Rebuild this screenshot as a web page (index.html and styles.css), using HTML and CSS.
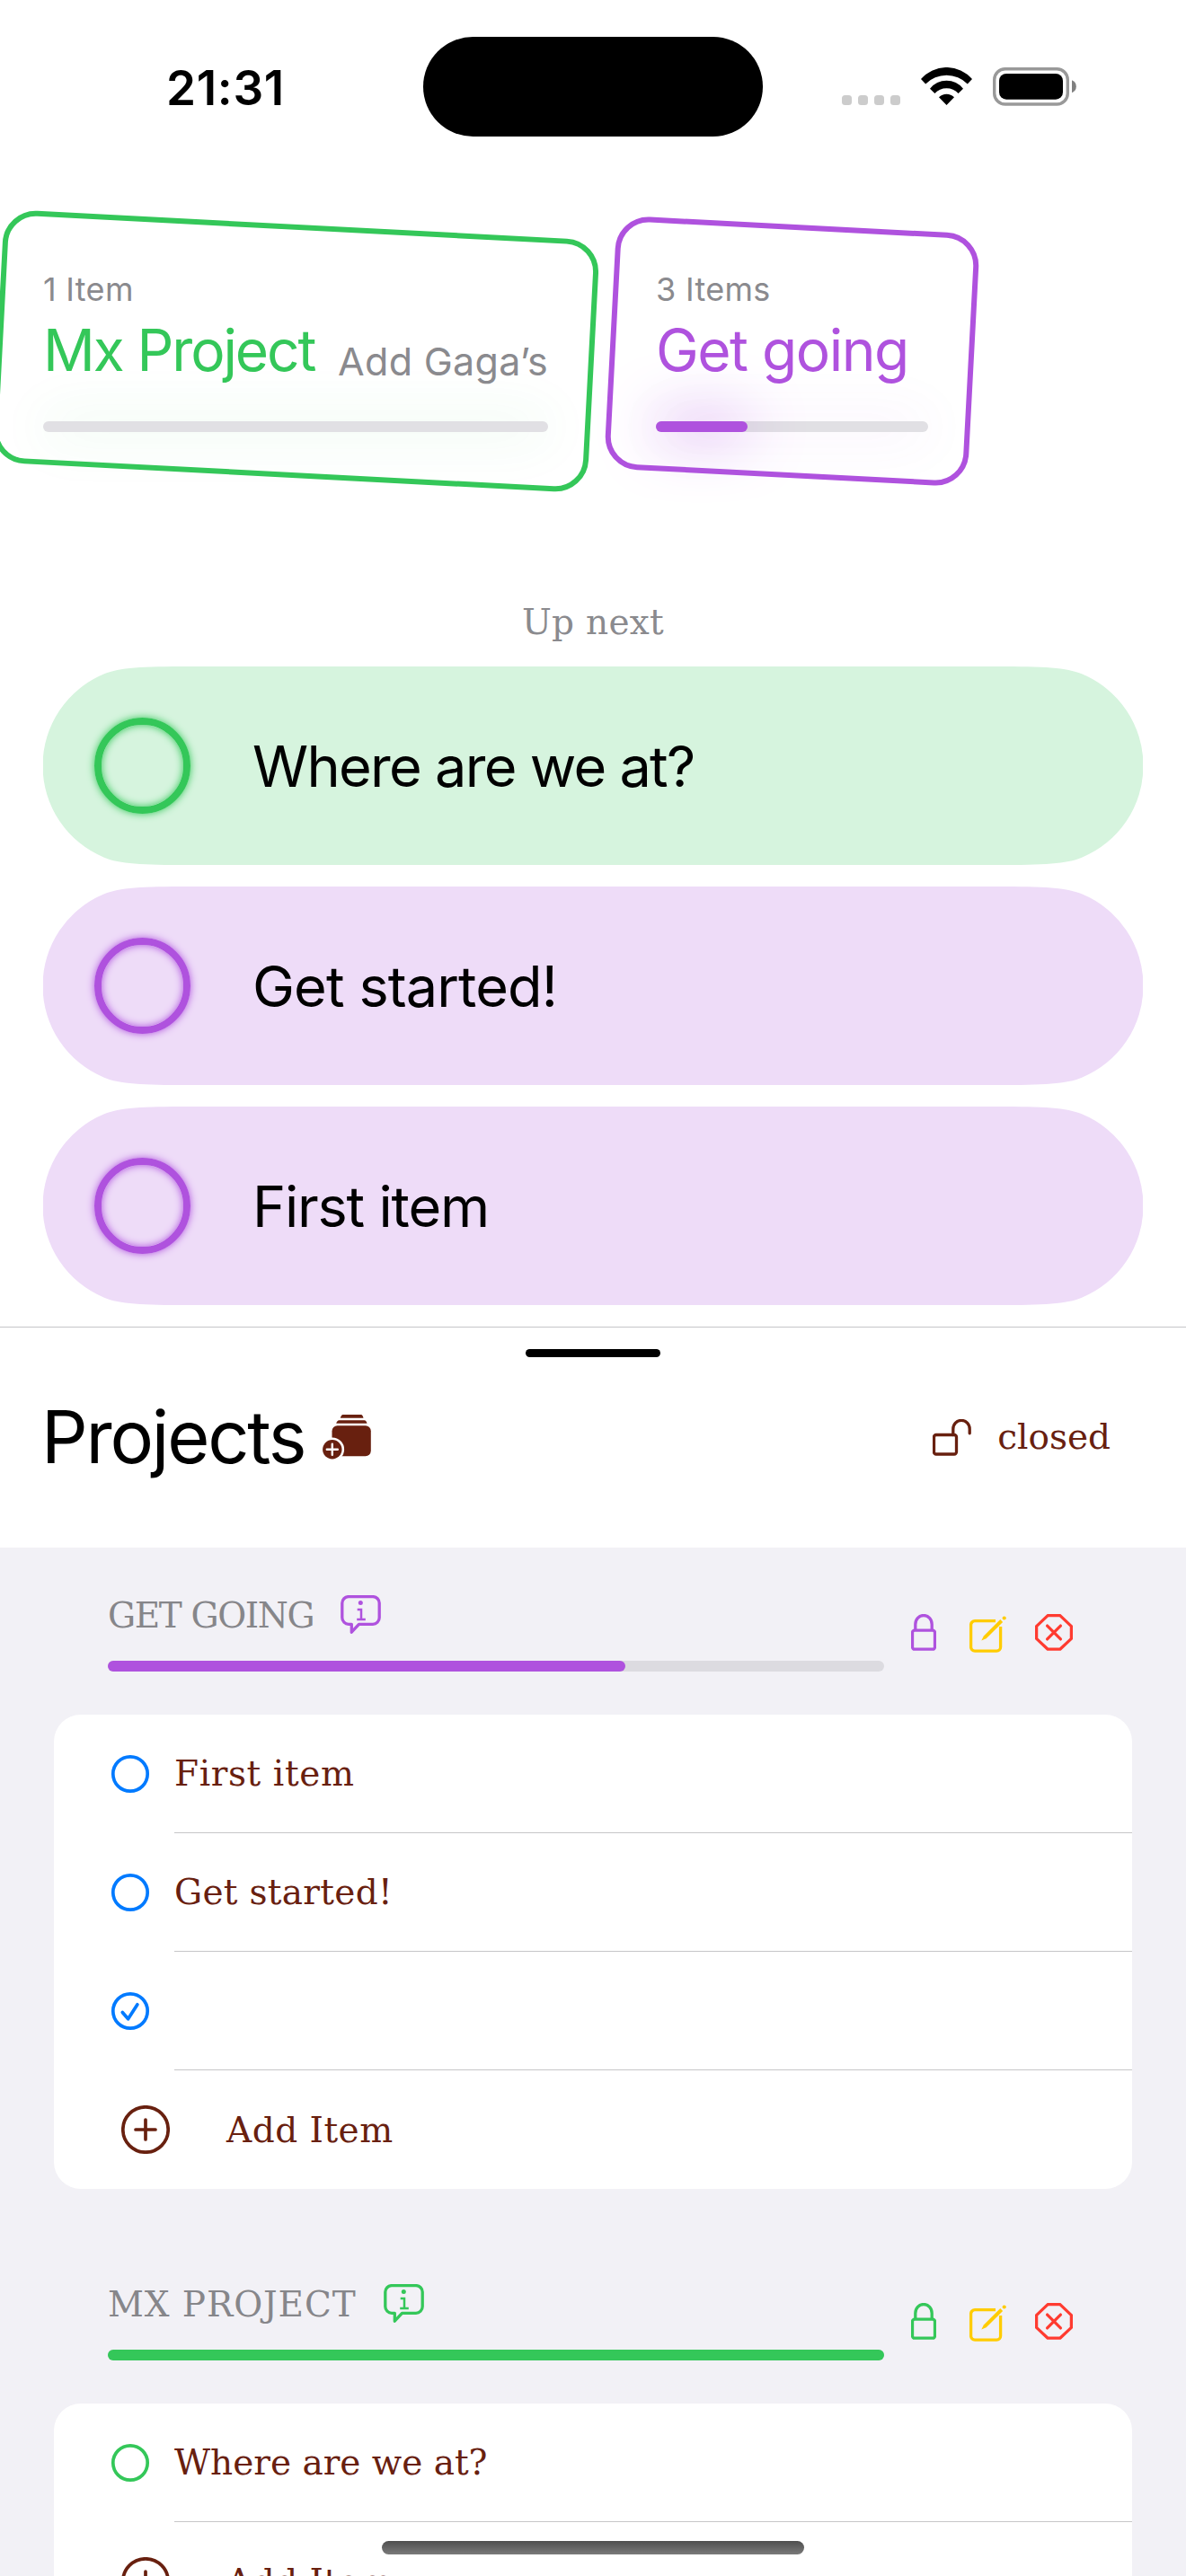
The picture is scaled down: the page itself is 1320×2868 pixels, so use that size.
FILE: index.html
```html
<!DOCTYPE html>
<html lang="en">
<head>
<meta charset="utf-8">
<title>Projects</title>
<link rel="stylesheet" href="styles.css">
</head>
<body>
<svg class="defs" width="0" height="0" aria-hidden="true">
  <symbol id="lock" viewBox="0 0 28 41"><rect x="1.5" y="18.2" width="25" height="21" rx="2.5"/><path d="M4.8 18V11.5a9.2 10 0 0 1 18.4 0V18"/></symbol>
  <symbol id="unlock" viewBox="0 0 43 41"><rect x="1.5" y="17.5" width="25" height="21.5" rx="2.5"/><path d="M22.8 17.5V11a9.2 9.6 0 0 1 18.4 0V15.8" stroke-linecap="round"/></symbol>
  <symbol id="edit" viewBox="0 0 42 42"><path d="M29 5.7H6a4.4 4.4 0 0 0-4.4 4.4V34.7a4.4 4.4 0 0 0 4.4 4.4H30.2a4.4 4.4 0 0 0 4.4-4.4V12"/><path class="solid" d="M13.3 27.6l2.5-5.1L34.3 4.1l2.8 2.8L18.7 25.3z"/><circle class="solid" cx="38.7" cy="2.5" r="2.1"/></symbol>
  <symbol id="remove" viewBox="0 0 42 41"><path d="M14.2 1.6H27.8L40.4 13.6V27.4L27.8 39.2H14.2L1.6 27.4V13.6z" stroke-linejoin="round"/><path d="M13.6 13.1L28.4 27.9M28.4 13.1L13.6 27.9" stroke-linecap="round"/></symbol>
  <symbol id="info" viewBox="0 0 45 44"><path d="M9 1.6H36a7.2 7.2 0 0 1 7.2 7.2V25.1a7.2 7.2 0 0 1-7.2 7.2H20.5L12.3 41.2V32.3H9a7.2 7.2 0 0 1-7.2-7.2V8.8A7.2 7.2 0 0 1 9 1.6z" stroke-linejoin="round"/><circle class="solid" cx="22.3" cy="8.6" r="2.5"/><path d="M18.7 15.9h4.3v11.2M18.2 27.1h9.6" stroke-width="2.5"/></symbol>
  <symbol id="plus" viewBox="0 0 54 54"><circle cx="27" cy="27" r="25.2"/><path d="M27 16v22M16 27h22" stroke-linecap="round"/></symbol>
</svg>

<div class="screen">
  <header class="status">
    <div class="time">21:31</div>
    <div class="island"></div>
    <div class="indicators">
      <div class="dots"><i></i><i></i><i></i><i></i></div>
      <svg class="wifi" width="57" height="42" viewBox="0 0 57 42"><path d="M0 13A37.7 37.7 0 0 1 57 13L51.8 18.5A33 33 0 0 0 5.2 18.5zM10 23.7A23.5 23.5 0 0 1 47 23.7L41.6 29A18 18 0 0 0 15.4 29zM20 33.3A12 12 0 0 1 37 33.3L28.5 42z"/></svg>
      <svg class="battery" width="94" height="43" viewBox="0 0 94 43"><rect x="1.7" y="1.7" width="81.6" height="39.3" rx="12" fill="none" stroke="#999" stroke-width="3.4"/><rect x="7" y="7" width="71" height="28.7" rx="8"/><path d="M88 14.3a7.5 7.5 0 0 1 0 14z" fill="#808080"/></svg>
    </div>
  </header>

  <section class="cards">
    <article class="card green card-wide">
      <div class="count">1 Item</div>
      <div class="titles"><span class="name t-mx">Mx Project</span><span class="next">Add Gaga’s</span></div>
      <div class="meter"></div>
    </article>
    <article class="card purple">
      <div class="count">3 Items</div>
      <div class="titles"><span class="name t-going">Get going</span></div>
      <div class="meter"><div class="fill glow" style="width:33.7%"></div></div>
    </article>
  </section>

  <section class="upnext">
    <h2>Up next</h2>
    <div class="pill green"><span class="ring"></span><span class="p-where">Where are we at?</span></div>
    <div class="pill purple"><span class="ring"></span><span class="p-start">Get started!</span></div>
    <div class="pill purple"><span class="ring"></span><span class="p-first">First item</span></div>
  </section>

  <section class="sheet">
    <div class="handle"></div>
    <div class="bar">
      <h1>Projects</h1>
      <svg class="stack" width="54" height="50" viewBox="0 0 54 50"><path d="M22.5 0h20.5q1.5 0 2.5 3.7h-25.7q1.2-3.7 2.7-3.7zM18.5 6.3h28q2.2 0 3 3.5h-34.3q1-3.5 3.3-3.5z"/><rect x="10.5" y="12.3" width="43.3" height="34" rx="6"/><circle cx="10.8" cy="38.7" r="13.3" fill="#fff"/><circle cx="10.8" cy="38.7" r="10.7"/><path d="M10.8 32.7v12M4.8 38.7h12" stroke="#fff" stroke-width="2.4" stroke-linecap="round"/></svg>
      <svg class="icon unlock" width="43" height="41"><use href="#unlock"/></svg>
      <span class="state">closed</span>
    </div>
  </section>

  <main class="list">
    <section class="group purple">
      <div class="head">
        <div class="info">
          <div class="label"><span class="l-going">GET GOING</span><svg class="icon" width="45" height="44"><use href="#info"/></svg></div>
          <div class="meter"><div class="fill" style="width:66.67%"></div></div>
        </div>
        <svg class="icon" width="28" height="41"><use href="#lock"/></svg>
        <svg class="icon edit" width="42" height="42"><use href="#edit"/></svg>
        <svg class="icon remove" width="42" height="41"><use href="#remove"/></svg>
      </div>
      <div class="rows">
        <div class="row"><svg class="icon check" width="42" height="42"><circle cx="21" cy="21" r="19.2"/></svg><div class="text i-first">First item</div></div>
        <div class="row"><svg class="icon check" width="42" height="42"><circle cx="21" cy="21" r="19.2"/></svg><div class="text i-start">Get started!</div></div>
        <div class="row"><svg class="icon check" width="42" height="42"><circle cx="21" cy="21" r="19.2"/><path d="M12.3 22.5l6.3 7.3L28.9 13.8" stroke-linecap="round" stroke-linejoin="round"/></svg><div class="text"></div></div>
        <div class="row add"><svg class="icon" width="54" height="54"><use href="#plus"/></svg><div>Add Item</div></div>
      </div>
    </section>
    <section class="group green">
      <div class="head">
        <div class="info">
          <div class="label"><span class="l-mx">MX PROJECT</span><svg class="icon" width="45" height="44"><use href="#info"/></svg></div>
          <div class="meter"><div class="fill" style="width:100%"></div></div>
        </div>
        <svg class="icon" width="28" height="41"><use href="#lock"/></svg>
        <svg class="icon edit" width="42" height="42"><use href="#edit"/></svg>
        <svg class="icon remove" width="42" height="41"><use href="#remove"/></svg>
      </div>
      <div class="rows">
        <div class="row"><svg class="icon check-green" width="42" height="42"><circle cx="21" cy="21" r="19.2"/></svg><div class="text">Where are we at?</div></div>
        <div class="row add"><svg class="icon" width="54" height="54"><use href="#plus"/></svg><div>Add Item</div></div>
      </div>
    </section>
  </main>
  <div class="home"></div>
</div>
</body>
</html>
```

FILE: styles.css
```css
* { box-sizing: border-box; margin: 0; padding: 0; }
body { background: #fff; }
.defs { position: absolute; }
.screen {
  position: relative;
  display: flex;
  flex-direction: column;
  width: 1320px;
  height: 2868px;
  overflow: hidden;
  background: #fff;
  color: #000;
  font-family: Inter, "Liberation Sans", sans-serif;
}
.green { --tint: #34c759; --soft: #d6f4de; --haze: rgba(52, 199, 89, .2); }
.purple { --tint: #af52de; --soft: #eedcf8; --haze: rgba(175, 82, 222, .16); }

/* Status bar */
.status {
  display: grid;
  grid-template-columns: 471px 378px 471px;
  align-items: center;
  padding-top: 41px;
  height: 152px;
}
.time { padding-left: 185px; font-size: 53px; font-weight: 600; letter-spacing: .7px; line-height: 62px; padding-top: 2px; }
.island { height: 111px; border-radius: 56px; background: #000; }
.indicators { display: flex; align-items: flex-end; padding-left: 88px; height: 43px; }
.dots { display: flex; gap: 7px; margin-bottom: 1px; }
.dots i { width: 11px; height: 11px; border-radius: 3.5px; background: #ccc; }
.wifi { margin: 0 23px 1px 23px; }

/* Project cards */
.cards { display: flex; gap: 24px; margin-top: 101px; }
.card { position: relative; width: 399px; height: 276px; padding: 48px; }
.card-wide { width: 658px; }
.card::after {
  content: "";
  position: absolute;
  inset: -3px;
  border: 6px solid var(--tint);
  border-radius: 37px;
  transform: rotate(3deg);
}
.count { color: #8a8a8e; font-size: 36px; line-height: 42px; letter-spacing: .3px; }
.titles { display: flex; justify-content: space-between; align-items: flex-end; margin-top: 9px; height: 76px; white-space: nowrap; }
.name { position: relative; z-index: 1; color: var(--tint); font-size: 64px; line-height: 76px; }
.t-mx { letter-spacing: -2.1px; }
.t-going { letter-spacing: -1.5px; }
.next { color: #8a8a8e; font-size: 43px; line-height: 52px; letter-spacing: .3px; }
.meter { height: 12px; border-radius: 6px; background: #dcdbe0; }
.fill { height: 12px; border-radius: 6px; background: var(--tint); }
.card .meter { margin-top: 41px; background: #e1e0e4; box-shadow: 0 0 60px var(--haze); }
.card .glow { box-shadow: 0 0 66px var(--tint); }

/* Up next */
.upnext { display: flex; flex-direction: column; gap: 24px; margin-top: 128px; padding: 0 48px; }
h2 {
  height: 61px;
  text-align: center;
  color: #8a8a8e;
  font: 400 39px/72px "DejaVu Serif", serif;
  letter-spacing: .3px;
}
.pill {
  display: flex;
  align-items: center;
  gap: 69px;
  height: 221px;
  padding-left: 57px;
  background: var(--soft);
  /* capsule with continuous corners */
  clip-path: path("M162 0H1062C1114 0 1139 1.2 1156 8.3A110.5 110.5 0 0 1 1156 212.7C1139 219.8 1114 221 1062 221H162C110 221 85 219.8 68 212.7A110.5 110.5 0 0 1 68 8.3C85 1.2 110 0 162 0Z");
  font-size: 63px;
}
.ring {
  width: 107px;
  height: 107px;
  border: 8px solid var(--tint);
  border-radius: 50%;
  box-shadow: 0 0 9px var(--tint), inset 0 0 9px var(--tint);
}
.p-where { letter-spacing: -1.7px; }
.p-start { letter-spacing: -.9px; }
.p-first { letter-spacing: -1.2px; }

/* Projects header */
.sheet { height: 246px; margin-top: 24px; border-top: 1px solid #c6c6c8; padding-top: 24px; }
.handle { width: 150px; height: 9px; margin: 0 auto; border-radius: 5px; background: #000; }
.bar { display: flex; align-items: center; height: 100px; margin-top: 39px; padding: 0 84px 0 46px; color: #68200f; }
h1 { width: 313px; color: #000; font-size: 81px; font-weight: 400; letter-spacing: -2.2px; line-height: 100px; }
.stack { fill: #68200f; }
.unlock { margin-left: auto; margin-right: 29px; }
.icon { flex: none; fill: none; stroke: currentColor; stroke-width: 3.3; overflow: visible; }
.solid { fill: currentColor; stroke: none; }
.state { font: 39px/50px "DejaVu Serif", serif; }

/* Project list */
.list {
  flex: 1;
  min-height: 0;
  padding: 51px 60px 0;
  background: #f2f1f6;
  color: #68200f;
  font-family: "DejaVu Serif", serif;
  font-size: 39px;
}
.group { height: 767px; }
.head { display: flex; align-items: center; height: 87px; padding-left: 60px; color: var(--tint); }
.info { width: 864px; margin-right: 30px; }
.label { display: flex; align-items: center; gap: 30px; height: 48px; margin-bottom: 27px; }
.label span { color: #86868a; }
.l-going { letter-spacing: -1.4px; }
.l-mx { letter-spacing: .9px; }
.edit { margin: 4px 31px 0 37px; color: #ffcc00; }
.remove { color: #ff3b30; }
.rows { margin-top: 48px; border-radius: 30px; background: #fff; overflow: hidden; }
.row { display: flex; align-items: center; gap: 28px; height: 132px; padding-left: 64px; }
.row .icon { stroke-width: 3.7; }
.check { color: #007aff; }
.check-green { color: var(--tint); }
.text { flex: 1; height: 132px; line-height: 132px; border-bottom: 1px solid #c6c6c8; white-space: nowrap; }
.i-first { letter-spacing: .6px; }
.i-start { letter-spacing: .3px; }
.add { gap: 63px; padding-left: 75px; letter-spacing: .5px; }

.home {
  position: absolute;
  left: 425px;
  top: 2829px;
  width: 470px;
  height: 15px;
  border-radius: 8px;
  background: linear-gradient(#4e4e4e, #7a7a7a);
}
```
